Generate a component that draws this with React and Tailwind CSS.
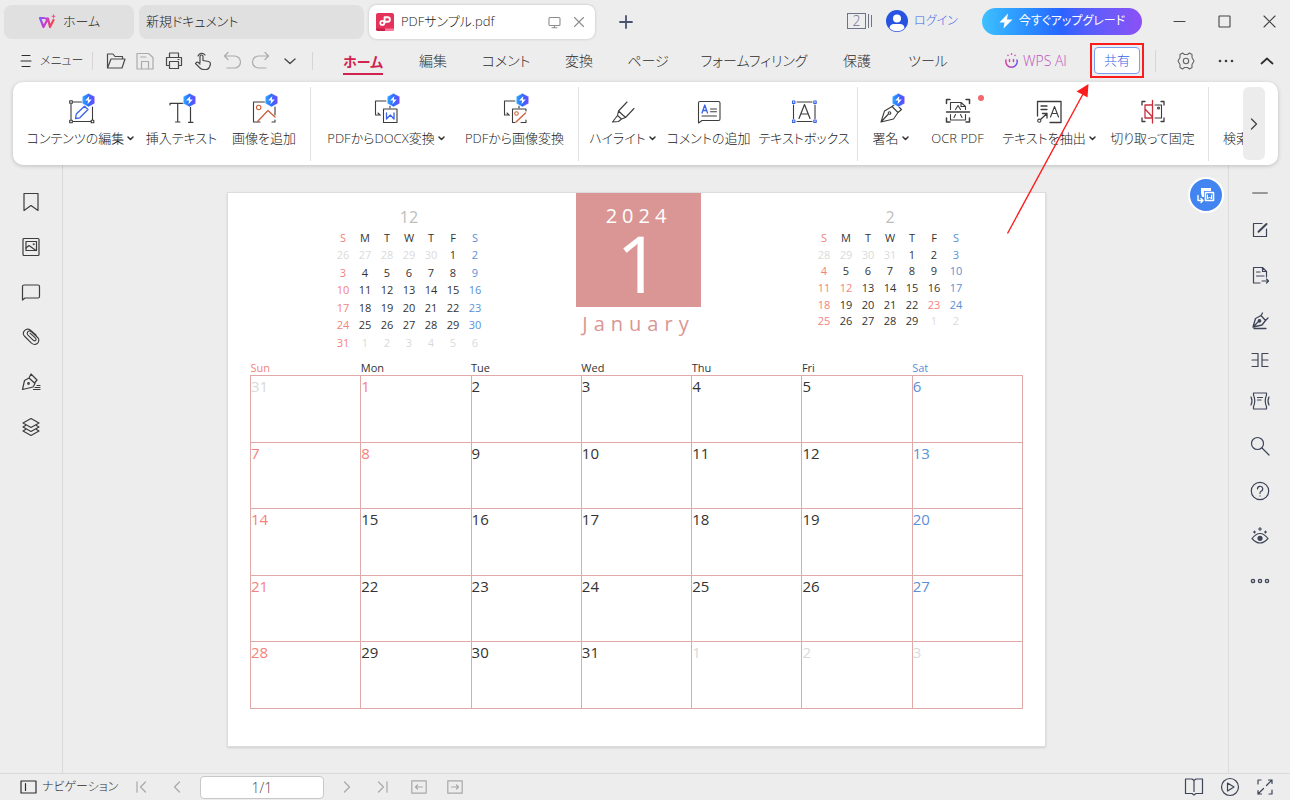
import React from "react";

const Ico = ({ w = 20, h = 20, sw = 1.2, className = "", children }) => (
  <svg
    width={w}
    height={h}
    viewBox={`0 0 ${w} ${h}`}
    fill="none"
    stroke="currentColor"
    strokeWidth={sw}
    strokeLinecap="round"
    strokeLinejoin="round"
    className={`shrink-0 ${className}`}
    aria-hidden="true"
  >
    {children}
  </svg>
);

const Gradients = () => (
  <svg width="0" height="0" className="absolute" aria-hidden="true">
    <defs>
      <linearGradient id="badge" x1="0" y1="0" x2="1" y2="0">
        <stop offset="0" stopColor="#2fa8ff" />
        <stop offset="0.5" stopColor="#2f6bff" />
        <stop offset="1" stopColor="#7048ff" />
      </linearGradient>
      <linearGradient id="wps" gradientUnits="userSpaceOnUse" x1="1" y1="0" x2="17" y2="6">
        <stop offset="0" stopColor="#6a6cff" />
        <stop offset="0.45" stopColor="#c03ce0" />
        <stop offset="1" stopColor="#ff4a3c" />
      </linearGradient>
      <linearGradient id="smile" x1="0" y1="0" x2="1" y2="0">
        <stop offset="0" stopColor="#e0409c" />
        <stop offset="1" stopColor="#6a5cf0" />
      </linearGradient>
    </defs>
  </svg>
);

const Badge = () => (
  <g stroke="none">
    <path d="M21.500 0.300 L27.800 3.500 V10.600 L21.500 14 L15.200 10.600 V3.500 Z" fill="url(#badge)" stroke="#fff" strokeWidth="0.6" />
    <path d="M22.300 3 L18.200 7.600 H21 L20.500 11.200 L24.700 6.400 H21.800 Z" fill="#fff" />
  </g>
);

const Caret = () => (
  <Ico w={7} h={5} sw={1.5} className="text-[#333]">
    <path d="M1 1 L3.500 3.500 L6 1" />
  </Ico>
);

const RIcon = ({ children }) => (
  <Ico w={28} h={31} sw={1.1} className="text-[#3d3d3d]">
    {children}
  </Ico>
);

const BLUE = "#3a63e8";
const ORANGE = "#d0603c";

const icons = {
  edit: (
    <RIcon>
      <path d="M4 11 V26.500 M6 9 H16 M6 28.500 H24 M25.500 14 V26.500" />
      <rect x="2.700" y="7.700" width="2.600" height="2.600" />
      <rect x="2.700" y="27.200" width="2.600" height="2.600" />
      <rect x="24.200" y="27.200" width="2.600" height="2.600" />
      <path d="M8.500 25.500 L9.300 21 L17.500 13.200 L21 16.500 L12.800 24.800 Z" stroke={BLUE} strokeWidth="1.300" />
    </RIcon>
  ),
  insertText: (
    <RIcon>
      <path d="M2 12 V10.300 H16 M9.700 10.300 V29 M7.500 29 H12 M22.500 14 V29 M20.500 29.300 H25" strokeWidth="1.200" />
    </RIcon>
  ),
  image: (
    <RIcon>
      <path d="M16 9 H3.500 V29 H10 M25 14 V22 M22 29 H25 V27" />
      <circle cx="8.700" cy="14.500" r="2.200" stroke={ORANGE} />
      <path d="M7.500 28.500 L18 17.500 L25 24" stroke={ORANGE} strokeWidth="1.300" />
    </RIcon>
  ),
  docx: (
    <RIcon>
      <path d="M14 8 H3.500 V22 H8 M6 20 L8.300 22.200 M18 15 V13" />
      <rect x="11.500" y="16" width="13.500" height="13.500" />
      <path d="M14.500 20 V26 L18.300 22 L22 26 V20" stroke={BLUE} strokeWidth="1.300" />
    </RIcon>
  ),
  toImage: (
    <RIcon>
      <path d="M14 8 H3.500 V22 H8 M6 20 L8.300 22.200 M18 15 V13" />
      <path d="M25 18 V16 H11.500 V29.500 H14 M20 29.500 H25 V27" />
      <circle cx="15.500" cy="20.500" r="1.800" stroke={ORANGE} />
      <path d="M15 29 L24.500 20" stroke={ORANGE} strokeWidth="1.400" />
    </RIcon>
  ),
  highlight: (
    <RIcon>
      <path d="M18 9 L9.500 18 L8.500 22.500 L12.500 26 L16.500 24.500 L25 15.500 M9.500 18 L16.500 24.500 M8.500 22.500 L3.500 29 L9.500 28.500 L12.500 26" />
    </RIcon>
  ),
  comment: (
    <RIcon>
      <path d="M3.500 30 V10 Q3.500 8.500 5 8.500 H23.500 Q25 8.500 25 10 V26 Q25 27.500 23.500 27.500 H7 Z M15.500 16 H21.500 M15.500 18.800 H21.500 M7 23 H21.500" />
      <path d="M7 20 L9.800 12 L12.500 20 M8 17.500 H11.600" stroke={BLUE} strokeWidth="1.300" />
    </RIcon>
  ),
  textBox: (
    <RIcon>
      <path d="M7 9 H22 M7 28.500 H22 M3.500 12 V25.500 M25 12 V25.500" />
      <path d="M9 25.500 L14.500 11.500 L20 25.500 M11 21 H18" strokeWidth="1.200" />
      <g stroke={BLUE}>
        <rect x="2.500" y="8" width="2.400" height="2.400" />
        <rect x="23.800" y="8" width="2.400" height="2.400" />
        <rect x="2.500" y="27" width="2.400" height="2.400" />
        <rect x="23.800" y="27" width="2.400" height="2.400" />
      </g>
    </RIcon>
  ),
  sign: (
    <RIcon>
      <path d="M4 29 L7.500 18 L15 13.500 L21 19.500 L16.500 26 Z M4 29 L11 21.500 M15 13.500 L17 12 M21 19.500 L24.500 16.500 L22 14" />
      <circle cx="12.500" cy="20" r="1.300" />
    </RIcon>
  ),
  ocr: (
    <RIcon>
      <path d="M6 6.500 H2.500 V10.500 M22 6.500 H25.500 V10.500 M2.500 25 V29 H6 M25.500 25 V29 H22 M2.500 19 H25.500" strokeWidth="1.500" />
      <path d="M6.500 16.500 V9.500 H17 L21.500 13.500 V16.500 M17 9.500 V13.500 H21.500 M6.500 21.500 V27 H21.500 V21.500 M11.500 16.500 L14 12.500 L16.500 16.500 M10 24.500 L11.500 21.500 M18 24.500 L16.500 21.500" />
    </RIcon>
  ),
  extract: (
    <RIcon>
      <path d="M2.500 23 V8.500 H26 V29.500 H15 M6 13 H12 M6 16.500 H12 M5.500 26.500 L12 20.500 M7.500 20.500 H12 V25" strokeWidth="1.300" />
      <circle cx="4.300" cy="27.700" r="1.600" />
      <path d="M15.500 24 L19.500 13.500 L23.500 24 M17 20.500 H22" />
    </RIcon>
  ),
  snip: (
    <RIcon>
      <path d="M6 8.500 H3 V12 M22 8.500 H25 V12 M3 25 V28.500 H6 M25 25 V28.500 H22" strokeWidth="1.300" />
      <path d="M16 12 H22.500 V25 H16" />
      <circle cx="19.500" cy="15" r="1" />
      <path d="M13.500 7.500 V30 M13.500 12 H6 V25 H13.500 M6.500 16.500 L13 23.500" stroke="#c8303c" strokeWidth="1.300" />
    </RIcon>
  ),
};

const withBadge = (icon) => (
  <span className="relative block h-[31px] w-7">
    {icon}
    <svg width="28" height="31" viewBox="0 0 28 31" className="absolute inset-0" aria-hidden="true">
      <Badge />
    </svg>
  </span>
);

const Tool = ({ label, icon, badge, caret, dot, width }) => (
  <button type="button" className={`flex shrink-0 flex-col items-center gap-1 ${width}`}>
    <span className="relative">
      {badge ? withBadge(icon) : icon}
      {dot && <span className="absolute top-0.5 -right-3 size-1.5 rounded-full bg-[#f2686b]" />}
    </span>
    <span className="flex items-center gap-[3px] text-[13px] leading-5 whitespace-nowrap text-[#222]">
      {label}
      {caret && <Caret />}
    </span>
  </button>
);

const Sep = () => <span className="mt-[-6px] h-[74px] w-px shrink-0 bg-[#e2e2e2]" />;

const IconButton = ({ label, className = "", children }) => (
  <button type="button" aria-label={label} className={`flex items-center justify-center ${className}`}>
    {children}
  </button>
);

function TitleBar() {
  return (
    <header className="flex h-11 items-start pt-[5px] pr-3.5 pl-1">
      <nav aria-label="タブ" className="flex gap-[5px]">
        <button type="button" className="flex h-[34px] w-[130px] items-center justify-center gap-[7px] rounded-lg bg-[#e0e0e0] text-[13px] text-[#222]">
          <Ico w={18} h={16} sw={2.2}>
            <path d="M2 4 H6 M2 4 L5.500 13 L9.500 5.500 M7.500 4.500 H10 L12 13 L15.500 6" stroke="url(#wps)" />
            <path d="M15.500 0.800 V3.800 M14 2.300 H17" stroke="#f0508c" strokeWidth="1" />
          </Ico>
          ホーム
        </button>
        <button type="button" className="flex h-[34px] w-[225px] items-center rounded-lg bg-[#e0e0e0] pl-[7px] text-[13px] text-[#222]">
          新規ドキュメント
        </button>
        <div className="flex h-[34px] w-[226px] items-center rounded-lg bg-white pr-2.5 pl-[7px] text-[13px] text-[#222] shadow-[0_0_3px_rgba(0,0,0,0.2)]">
          <Ico w={18} h={18}>
            <rect x="0" y="0" width="18" height="18" rx="2" fill="#e5325a" stroke="none" />
            <path d="M9 18 H16 Q18 18 18 16 V15.500 H9 Z" fill="#ff7a9c" stroke="none" />
            <path d="M0 15.500 H9 V18 H2 Q0 18 0 16 Z" fill="#c91f47" stroke="none" />
            <circle cx="6.300" cy="9.900" r="2" stroke="#fff" strokeWidth="1.700" />
            <path d="M8.600 10 V4.200 H11.600 A2.300 2.300 0 0 1 11.600 8.800 H9" stroke="#fff" strokeWidth="1.900" />
          </Ico>
          <span className="ml-[7px] flex-1">PDFサンプル.pdf</span>
          <IconButton label="画面表示" className="mr-3 text-[#8c8c8c]">
            <Ico w={13} h={13} sw={1.1}>
              <rect x="1" y="1.500" width="11" height="8" rx="1" />
              <path d="M6.500 9.500 V11.500 M4 11.800 H9" />
            </Ico>
          </IconButton>
          <IconButton label="閉じる" className="text-[#8c8c8c]">
            <Ico w={12} h={12} sw={1.1}>
              <path d="M1.500 1.500 L10.500 10.500 M10.500 1.500 L1.500 10.500" />
            </Ico>
          </IconButton>
        </div>
      </nav>
      <IconButton label="新しいタブ" className="ml-6 h-[34px] text-[#47536f]">
        <Ico w={14} h={14} sw={1.8}>
          <path d="M7 1 V13 M1 7 H13" />
        </Ico>
      </IconButton>
      <div className="ml-auto flex h-8 items-center">
        <button type="button" aria-label="ウィンドウ 2" className="flex items-center gap-0.5 text-[#6b7488]">
          <span className="flex h-4 w-[19px] items-center justify-center border border-[#6b7488] text-sm leading-none">2</span>
          <span className="h-3.5 w-px bg-[#6b7488]" />
          <span className="h-3 w-px bg-[#6b7488]" />
        </button>
        <button type="button" className="ml-[14px] flex w-[70px] items-center gap-1.5 text-xs whitespace-nowrap text-[#3a63e8]">
          <Ico w={22} h={22} sw={0}>
            <circle cx="11" cy="11" r="11" fill="#2853e0" />
            <circle cx="11" cy="8.500" r="4" fill="#fff" />
            <path d="M3.500 18 Q4 14 8 14 H14 Q18 14 18.500 18 Q15.500 21.300 11 21.300 Q6.500 21.300 3.500 18 Z" fill="#fff" />
          </Ico>
          ログイン
        </button>
        <button type="button" className="ml-[26px] flex h-[27px] w-40 items-center justify-center gap-1.5 rounded-full bg-gradient-to-r from-[#3fc0ff] via-[#2a63ff] to-[#8b50f5] text-xs font-normal whitespace-nowrap text-white">
          <Ico w={14} h={16} sw={0}>
            <path d="M9 0.500 L0.500 9.500 H5.500 L4.500 15.500 L13.500 6.500 H8 Z" fill="#fff" />
          </Ico>
          今すぐアップグレード
        </button>
        <div className="ml-[31px] flex items-center gap-8 text-[#444]">
          <IconButton label="最小化">
            <Ico w={13} h={13} sw={1.1}><path d="M1 6.500 H12" /></Ico>
          </IconButton>
          <IconButton label="最大化">
            <Ico w={13} h={13} sw={1.1}><rect x="1" y="1" width="11" height="11" rx="0.500" /></Ico>
          </IconButton>
          <IconButton label="ウィンドウを閉じる">
            <Ico w={13} h={13} sw={1.1}><path d="M1 1 L12 12 M12 1 L1 12" /></Ico>
          </IconButton>
        </div>
      </div>
    </header>
  );
}

const menuTabs = [
  ["編集", "w-[30px]"],
  ["コメント", "w-11"],
  ["変換", "w-[30px]"],
  ["ページ", "w-9"],
  ["フォームフィリング", "w-26"],
  ["保護", "w-[30px]"],
  ["ツール", "w-10"],
];

function MenuBar() {
  return (
    <div className="flex h-[38px] items-center pr-4 pb-[5px] pl-5 text-[#2d2d2d]">
      <button type="button" className="flex w-[58px] items-center gap-2 text-xs whitespace-nowrap">
        <Ico w={12} h={14} sw={1.1}><path d="M2 1.500 H10 M1 7 H11 M2 12.500 H10" /></Ico>
        メニュー
      </button>
      <span className="ml-3.5 h-[18px] w-px bg-[#d6d6d6]" />
      <div className="ml-[13px] flex gap-[9px] text-[#4a4a4a]">
        <IconButton label="開く">
          <Ico><path d="M1.500 17 V3 H7 L9 5.500 H16.500 V8 M1.500 17 L5 8 H19 L16 17 Z" /></Ico>
        </IconButton>
        <IconButton label="保存" className="text-[#ababab]">
          <Ico><path d="M2 2.500 H13.500 L18 6.500 V18 H2 Z M6.500 18 V10.500 H13.500 V18 M5.500 6 H11" /></Ico>
        </IconButton>
        <IconButton label="印刷">
          <Ico><path d="M5.500 6 V2 H14.500 V6 M5.500 14.500 H2.500 V6.500 H17.500 V14.500 H14.500 M5.500 10.500 H14.500 V17.500 H5.500 Z M14 8.500 H15" /></Ico>
        </IconButton>
        <IconButton label="手のひら">
          <Ico><path d="M5 5 A4 4 0 0 1 12 4 M7 11.500 V5.500 A1.500 1.500 0 0 1 10 5.500 V9.500 L15.500 10.500 Q17.500 11 17.500 13 L16.500 16 Q15.500 18.500 13 18.500 H10.500 Q8.500 18.500 7 17 L2.500 12.500 Q3.500 10.500 5.500 11.500 L7 13" /></Ico>
        </IconButton>
        <IconButton label="元に戻す" className="text-[#ababab]">
          <Ico><path d="M6 1.500 L2.500 5 L6 8.500 M2.500 5 H12.500 A6 6 0 0 1 12.500 17 H5" /></Ico>
        </IconButton>
        <IconButton label="やり直し" className="text-[#ababab]">
          <Ico><path d="M14 1.500 L17.500 5 L14 8.500 M17.500 5 H7.500 A6 6 0 0 0 7.500 17 H15" /></Ico>
        </IconButton>
        <IconButton label="その他">
          <Ico sw={1.4}><path d="M5 8 L10 12.500 L15 8" /></Ico>
        </IconButton>
      </div>
      <span className="ml-3 h-[18px] w-px bg-[#d6d6d6]" />
      <nav aria-label="メニュー" className="ml-[31px] flex items-center gap-9 text-sm">
        <button type="button" className="flex w-[38px] justify-center whitespace-nowrap">
          <span className="border-b-2 border-[#d0234f] pt-1 leading-[23px] font-bold text-[#d0234f]">ホーム</span>
        </button>
        {menuTabs.map(([t, w]) => (
          <button key={t} type="button" className={`flex justify-center whitespace-nowrap ${w}`}>{t}</button>
        ))}
      </nav>
      <div className="ml-auto flex items-center">
        <button type="button" className="flex w-[70px] items-center gap-1 text-sm whitespace-nowrap text-[#c04fc0]">
          <Ico w={15} h={15} sw={1.5}>
            <path d="M2 7 A5.700 5.700 0 1 0 13 7" stroke="url(#smile)" />
            <path d="M5.500 6.500 V8.500 M9.500 6.500 V8.500" stroke="#d04ca8" />
            <path d="M7.500 0.800 V1.200 M4 2.300 V2.600 M11 2.300 V2.600" stroke="#c850b0" />
          </Ico>
          WPS AI
        </button>
        <div className="relative ml-4 border-2 border-[#fb1d1d] p-0.5">
          <button type="button" className="block h-[27px] w-[46px] rounded-sm border border-[#7b9cf3] bg-white text-[13px] text-[#3a63e8]">共有</button>
          <svg width="86" height="154" viewBox="0 0 86 154" className="pointer-events-none absolute top-[37px] -left-[87px] z-10" aria-hidden="true">
            <path d="M2.500 151.500 L78 12" stroke="#fb1d1d" strokeWidth="1.400" fill="none" />
            <path d="M83.500 2 L82.500 15.500 L77.500 12.500 L71.500 9.500 Z" fill="#fb1d1d" />
          </svg>
        </div>
        <span className="ml-[11px] h-[22px] w-px bg-[#d6d6d6]" />
        <IconButton label="設定" className="ml-5 text-[#666]">
          <Ico w={20} h={20} sw={1.1}>
            <path d="M6.500 2 L8.500 3.500 H11.500 L13.500 2 L16 3.500 V6.500 L18 10 L16 13.500 V16.500 L13.500 18 L11.500 16.500 H8.500 L6.500 18 L4 16.500 V13.500 L2 10 L4 6.500 V3.500 Z" />
            <circle cx="10" cy="10" r="2.700" />
          </Ico>
        </IconButton>
        <IconButton label="その他のオプション" className="ml-[22px]">
          <Ico w={16} h={6} sw={0}>
            <g fill="#3d3d3d"><circle cx="2" cy="3" r="1.300" /><circle cx="8" cy="3" r="1.300" /><circle cx="14" cy="3" r="1.300" /></g>
          </Ico>
        </IconButton>
        <IconButton label="リボンを折りたたむ" className="ml-[26px]">
          <Ico w={14} h={8} sw={1.7}><path d="M1.500 6.500 L7 1.500 L12.500 6.500" /></Ico>
        </IconButton>
      </div>
    </div>
  );
}

function Ribbon() {
  return (
    <div className="z-[1] mr-3 ml-[13px] flex h-[83px] rounded-[10px] bg-white pr-[13px] shadow-[0_1px_4px_rgba(0,0,0,0.2)]">
      <div className="flex min-w-0 flex-1 overflow-hidden pt-[11px]">
        <Tool label="コンテンツの編集" icon={icons.edit} badge caret width="ml-2 w-[119px]" />
        <Tool label="挿入テキスト" icon={icons.insertText} badge width="w-[83px]" />
        <Tool label="画像を追加" icon={icons.image} badge width="mr-[5px] w-[82px]" />
        <Sep />
        <Tool label="PDFからDOCX変換" icon={icons.docx} badge caret width="ml-1.5 w-[138px]" />
        <Tool label="PDFから画像変換" icon={icons.toImage} badge width="mr-1 w-[119px]" />
        <Sep />
        <Tool label="ハイライト" icon={icons.highlight} caret width="ml-1.5 w-[75px]" />
        <Tool label="コメントの追加" icon={icons.comment} width="w-[97px]" />
        <Tool label="テキストボックス" icon={icons.textBox} width="mr-1.5 w-[94px]" />
        <Sep />
        <Tool label="署名" icon={icons.sign} badge caret width="ml-1 w-[57px]" />
        <Tool label="OCR PDF" icon={icons.ocr} dot width="w-[77px]" />
        <Tool label="テキストを抽出" icon={icons.extract} caret width="w-[106px]" />
        <Tool label="切り取って固定" icon={icons.snip} width="mr-[5px] w-[101px]" />
        <Sep />
        <Tool label="検索と置換" icon={<Ico w={28} h={31} />} width="ml-3.5" />
      </div>
      <IconButton label="右へスクロール" className="mt-[5px] h-[73px] w-[22px] shrink-0 rounded-md bg-[#ececec] text-[#444]">
        <Ico w={8} h={12} sw={1.3}><path d="M1.500 1 L6.500 6 L1.500 11" /></Ico>
      </IconButton>
    </div>
  );
}

const leftTools = [
  ["しおり", <path d="M3 1.500 H17 V18.500 L10 13.500 L3 18.500 Z" />],
  ["サムネイル", <g><rect x="2" y="1.500" width="16" height="17" rx="1" /><rect x="5" y="4.500" width="10.500" height="9" /><path d="M5 11 L8 8.500 L15 13.500" /><circle cx="12.700" cy="7.200" r="0.400" /></g>],
  ["注釈", <path d="M1.500 18 V4.500 Q1.500 3 3 3 H17 Q18.500 3 18.500 4.500 V14.500 Q18.500 16 17 16 H4 Z" />],
  ["添付ファイル", <path d="M15.500 8 L9.500 2.800 Q6 0.500 3 3.500 Q0.500 6.500 3.500 9.500 L10.500 16.500 Q14 19.300 17 16.500 Q19.500 13.500 17 10.500 L10.500 4.500 Q8 2.800 6.500 4.500 Q5.200 6 6.800 8 L12.500 13.500 Q14 14.500 15 13.500 Q16 12.500 14.500 11 L9 6" transform="translate(0.500 0.500) scale(0.950)" />],
  ["署名", <g><path d="M1.500 17.500 L3.500 8.500 L8 6 L14 11.500 L12 15 L1.500 17.500 M8 6 L10 2 L16 8 L13.500 11 M12.500 17.500 H19 M14 15.500 H19 M16 13.500 H19" /><circle cx="7.500" cy="11.500" r="0.800" /></g>],
  ["レイヤー", <path d="M10 1.500 L18 6 L10 10.500 L2 6 Z M4.500 8.500 L2 10 L10 14.500 L18 10 L15.500 8.500 M4.500 12.500 L2 14 L10 18.500 L18 14 L15.500 12.500" />],
];

const rightTools = [
  ["編集", "h-[45px]", <g><path d="M12 3.500 H3.500 V16.500 H16.500 V9" /><path d="M8.500 11.800 L16.500 4" strokeWidth="2" /></g>],
  ["エクスポート", "h-[45px]", <path d="M10 18 H3.500 V2.500 H12.500 L16.500 6.500 V12 M12.500 2.500 V6.500 H16.500 M6.500 7 H10 M6.500 11 H14 M12 16 H18.500 M16.500 14 L18.500 16 L16.500 18" />],
  ["署名する", "h-[45px]", <g><path d="M3 17 L5.500 8.500 L11 5.500 L15.500 10.500 L12 15 Z M3 17 L9 11 M11 5.500 L12.500 3 M15.500 10.500 L18 8 M4 18.500 H16" strokeWidth="1.300" /><circle cx="9.500" cy="10.800" r="1.300" fill="currentColor" /></g>],
  ["分割", "h-9", <path d="M2 3.500 H8 V16.500 H2 M2 10 H8 M18 3.500 H12 V16.500 H18 M12 10 H18" />],
  ["圧縮", "h-[45px]", <path d="M3.500 2 H16.500 V4 Q14 10 16.500 15.500 V18 H3.500 V15.500 Q6 10 3.500 4 Z M1 6 Q3 10 1 14 M19 6 Q17 10 19 14 M7.500 6.500 H12.500 M7.500 9 H11" />],
  ["検索", "h-[45px]", <g><circle cx="7.500" cy="7.500" r="6" /><path d="M12 12 L19 19" /></g>],
  ["ヘルプ", "h-[45px]", <g><circle cx="10" cy="10" r="8.700" /><path d="M7.500 8 A2.600 2.600 0 1 1 11 10.300 Q10 10.800 10 12.500 M10 14.800 V15" /></g>],
  ["目の保護モード", "h-[45px]", <g><path d="M2 12.500 Q6 7.500 10 7.500 Q14 7.500 18 12.500 Q14 17 10 17 Q6 17 2 12.500 Z M10 1.500 V4.500 M8.500 3 H11.500 M4.500 5 V7 M3.500 6 H5.500 M15.500 5 V7 M14.500 6 H16.500" /><circle cx="10" cy="12.300" r="2" fill="currentColor" /></g>],
  ["もっと見る", "h-[45px]", <g strokeWidth="1.400"><circle cx="3" cy="10" r="1.600" /><circle cx="10" cy="10" r="1.600" /><circle cx="17" cy="10" r="1.600" /></g>],
];

const range = (a, b) => Array.from({ length: b - a + 1 }, (_, i) => a + i);
const chunk = (list) => range(0, list.length / 7 - 1).map((i) => list.slice(i * 7, i * 7 + 7));

const RED = "text-[#f4827d]";
const SAT = "text-[#5b90d6]";
const DIM = "text-[#dadada]";
const INK = "text-[#333]";

const tone = (col, dim, holiday) => (dim ? DIM : col === 0 || holiday ? RED : col === 6 ? SAT : INK);

const days = (before, count, after, holidays = []) =>
  chunk([
    ...before.map((n) => ({ n, dim: true })),
    ...range(1, count).map((n) => ({ n, holiday: holidays.includes(n) })),
    ...after.map((n) => ({ n, dim: true })),
  ]);

const december = days(range(26, 30), 31, range(1, 6));
const february = days(range(28, 31), 29, [1, 2], [12, 23]);
const january = days([31], 31, [1, 2, 3], [1, 8]);

const MiniMonth = ({ title, weeks, height }) => (
  <div className="w-[154px] pt-[13px]">
    <h2 className="text-center text-base leading-[23px] text-[#bdbdbd]">{title}</h2>
    <table className={`w-full table-fixed text-center text-[11px] leading-none ${height}`}>
      <thead>
        <tr>
          {["S", "M", "T", "W", "T", "F", "S"].map((d, i) => (
            <th key={i} scope="col" className={`h-[17px] p-0 font-normal ${tone(i)}`}>{d}</th>
          ))}
        </tr>
      </thead>
      <tbody>
        {weeks.map((wk, r) => (
          <tr key={r}>
            {wk.map((d, c) => (
              <td key={c} className={`p-0 ${tone(c, d.dim, d.holiday)}`}>{d.n}</td>
            ))}
          </tr>
        ))}
      </tbody>
    </table>
  </div>
);

function CalendarPage() {
  return (
    <article className="w-full max-w-[819px] border border-[#dcdcdc] bg-white px-[22px] pb-[37px] font-normal shadow-[0_1px_2px_rgba(0,0,0,0.12)]">
      <div className="flex h-[167px] items-start pl-[82px]">
        <MiniMonth title="12" weeks={december} height="h-[122px]" />
        <div className="ml-[90px] w-[125px] text-center">
          <div className="h-[114px] bg-[#da9694] pt-2.5 text-white">
            <p className="text-xl leading-[26px] tracking-[5px]">2024</p>
            <p className="text-[78px] leading-[68px]">1</p>
          </div>
          <p className="pt-1 text-xl leading-[26px] tracking-[6px] text-[#da9694]">January</p>
        </div>
        <div className="ml-28">
          <MiniMonth title="2" weeks={february} height="h-[100px]" />
        </div>
      </div>
      <table className="h-[349px] w-full table-fixed border-collapse text-left">
        <thead>
          <tr>
            {["Sun", "Mon", "Tue", "Wed", "Thu", "Fri", "Sat"].map((d, i) => (
              <th key={d} scope="col" className={`h-[15px] p-0 text-[11px] leading-[15px] font-normal ${tone(i)}`}>{d}</th>
            ))}
          </tr>
        </thead>
        <tbody>
          {january.map((wk, r) => (
            <tr key={r}>
              {wk.map((d, c) => (
                <td key={c} className={`border border-[#dfa9a7] p-0 align-top text-[15px] leading-5 ${tone(c, d.dim, d.holiday)}`}>{d.n}</td>
              ))}
            </tr>
          ))}
        </tbody>
      </table>
    </article>
  );
}

function StatusBar() {
  return (
    <footer className="flex h-[27px] items-center border-t border-[#d9d9d9] pr-4 pl-5 text-[#2d2d2d]">
      <button type="button" className="flex w-[95px] items-center gap-[5px] text-xs whitespace-nowrap">
        <Ico w={17} h={14} sw={1.2}><path d="M1 1 H16 V13 H1 Z M5.500 3.500 V10.500" /></Ico>
        ナビゲーション
      </button>
      <div className="ml-5 flex items-center gap-6 text-[#a8a8a8]">
        <IconButton label="最初のページ"><Ico w={12} h={12}><path d="M2 0.800 V11.200 M10.500 1 L5.500 6 L10.500 11" /></Ico></IconButton>
        <IconButton label="前のページ"><Ico w={12} h={12}><path d="M8.500 1 L3.500 6 L8.500 11" /></Ico></IconButton>
      </div>
      <input
        type="text"
        aria-label="ページ番号"
        defaultValue="1/1"
        className="ml-[17px] h-[23px] w-[124px] rounded border border-[#c8c8c8] bg-white text-center text-sm text-[#444]"
      />
      <div className="ml-[17px] flex items-center gap-6 text-[#a8a8a8]">
        <IconButton label="次のページ"><Ico w={12} h={12}><path d="M3.500 1 L8.500 6 L3.500 11" /></Ico></IconButton>
        <IconButton label="最後のページ"><Ico w={12} h={12}><path d="M1.500 1 L6.500 6 L1.500 11 M10 0.800 V11.200" /></Ico></IconButton>
      </div>
      <div className="ml-[22px] flex items-center gap-5 text-[#a8a8a8]">
        <IconButton label="戻る"><Ico w={16} h={14}><path d="M0.800 0.800 H15.200 V13.200 H0.800 Z M4.500 7 H11.500 M6.500 5 L4.500 7 L6.500 9" /></Ico></IconButton>
        <IconButton label="進む"><Ico w={16} h={14}><path d="M0.800 0.800 H15.200 V13.200 H0.800 Z M4.500 7 H11.500 M9.500 5 L11.500 7 L9.500 9" /></Ico></IconButton>
      </div>
      <div className="ml-auto flex items-center gap-4 text-[#3f4558]">
        <IconButton label="表示モード"><Ico><path d="M1.500 2 H8 L10 3.500 L12 2 H18.500 V16.500 H12 L10 18 L8 16.500 H1.500 Z M10 3.500 V14.500" /></Ico></IconButton>
        <IconButton label="再生"><Ico><circle cx="10" cy="10" r="8.500" /><path d="M7.500 6 L14 10 L7.500 14 Z" /></Ico></IconButton>
        <IconButton label="全画面表示"><Ico w={18} h={18}><path d="M2 6 V2 H5 M13 16 H16 V12 M10.500 7.500 L16 2 M12.500 2 H16 V5.500 M7.500 10.500 L2 16 M2 12.500 V16 H5.500" /></Ico></IconButton>
      </div>
    </footer>
  );
}

export default function App() {
  return (
    <div className="flex min-h-screen flex-col overflow-x-hidden bg-[#ededed] font-['Open_Sans','Noto_Sans_CJK_JP',sans-serif] font-light [font-feature-settings:'palt']">
      <Gradients />
      <TitleBar />
      <MenuBar />
      <Ribbon />
      <div className="flex flex-1">
        <aside className="flex w-[63px] shrink-0 flex-col border-r border-[#d9d9d9] pt-[14px] text-[#3d3d3d]">
          {leftTools.map(([label, shape]) => (
            <IconButton key={label} label={label} className="h-[45px]"><Ico>{shape}</Ico></IconButton>
          ))}
        </aside>
        <main className="relative flex min-w-0 flex-1 items-start justify-center pt-[27px] pr-[18px] pb-[26px]">
          <CalendarPage />
          <button
            type="button"
            aria-label="変換"
            className="absolute top-3 right-1 flex size-9 items-center justify-center rounded-full border-2 border-white bg-[#4285f0] text-white"
          >
            <Ico w={20} h={20} sw={1.6}>
              <path d="M5 8 V3 H15 V6 H8 V12 H6 Z" fill="#fff" stroke="none" />
              <rect x="9.500" y="7.500" width="8" height="8" />
              <path d="M11.500 10 V14 L13.500 12 L15.500 14 V10" strokeWidth="1" />
              <path d="M2 10.500 V15.500 H6.500 M5 13.500 L7 15.500 L5 17.500" strokeWidth="1.400" />
            </Ico>
          </button>
        </main>
        <aside className="flex w-[62px] shrink-0 flex-col border-l border-[#dcdcdc] pt-[13px] text-[#3f4558]">
          <IconButton label="折りたたむ" className="h-[29px] text-[#999]">
            <Ico w={16} h={4} sw={2}><path d="M1 2 H15" /></Ico>
          </IconButton>
          {rightTools.map(([label, h, shape]) => (
            <IconButton key={label} label={label} className={h}><Ico>{shape}</Ico></IconButton>
          ))}
        </aside>
      </div>
      <StatusBar />
    </div>
  );
}
